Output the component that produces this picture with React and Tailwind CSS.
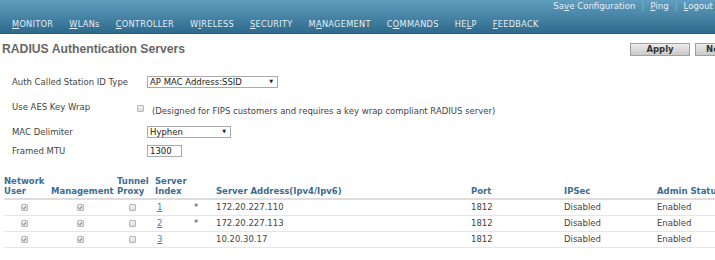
import React from "react";

const font = { fontFamily: '"DejaVu Sans", Verdana, sans-serif' };

function Acc({ pre = "", u, post = "" }) {
  return (
    <span>
      {pre}
      <span className="underline underline-offset-1">{u}</span>
      {post}
    </span>
  );
}

function Box({ checked }) {
  return (
    <span className="inline-flex h-[7px] w-[7px] items-center justify-center rounded-[1px] border border-[#b5b5b5] bg-gradient-to-b from-[#f4f4f4] to-[#dcdcdc]">
      {checked && (
        <svg viewBox="0 0 8 8" className="h-[7px] w-[7px]">
          <path d="M1.5 4.2 L3.2 6 L6.6 1.6" fill="none" stroke="#555" strokeWidth="1.4" />
        </svg>
      )}
    </span>
  );
}

function Select({ value, width }) {
  return (
    <div
      className={`flex h-[12px] items-center justify-between border border-[#a9a9a9] bg-white pl-[2px] pr-[4px] text-[8.5px] text-[#222] ${width}`}
    >
      <span>{value}</span>
      <span className="text-[5px]">▼</span>
    </div>
  );
}

const servers = [
  { idx: "1", star: true, addr: "172.20.227.110" },
  { idx: "2", star: true, addr: "172.20.227.113" },
  { idx: "3", star: false, addr: "10.20.30.17" },
];

const cols = "grid grid-cols-[47px_66px_38px_61px_255px_93px_93px_60px]";

export default function App() {
  return (
    <div className="h-[260px] w-[715px] overflow-hidden bg-white text-[#444]" style={font}>
      {/* top bar */}
      <div className="h-[34px] border-b border-[#2a5f7c] bg-gradient-to-b from-[#5f9ec0] to-[#2e6a8b] text-[#e3eef4]">
        <div className="flex h-[12px] items-center justify-end gap-[6px] pr-[2px] text-[8.6px]">
          <Acc pre="Sa" u="v" post="e Configuration" />
          <span className="text-[#8fb5cb]">|</span>
          <Acc u="P" post="ing" />
          <span className="text-[#8fb5cb]">|</span>
          <Acc u="L" post="ogout" />
        </div>
        <div className="flex h-[22px] items-center gap-[16px] pl-[12px] pt-[3px] text-[8.2px] tracking-[0.3px]">
          <Acc u="M" post="ONITOR" />
          <Acc u="W" post="LANs" />
          <Acc u="C" post="ONTROLLER" />
          <Acc pre="W" u="I" post="RELESS" />
          <Acc u="S" post="ECURITY" />
          <Acc pre="M" u="A" post="NAGEMENT" />
          <Acc pre="C" u="O" post="MMANDS" />
          <Acc pre="HE" u="L" post="P" />
          <Acc u="F" post="EEDBACK" />
        </div>
      </div>

      {/* title */}
      <div className="flex h-[28px] items-center pl-[2px]">
        <h1
          className="pt-[2px] text-[12.2px] font-bold text-[#676767]"
          style={{ fontFamily: '"Liberation Sans", Arial, sans-serif' }}
        >
          RADIUS Authentication Servers
        </h1>
        <div className="ml-auto mr-[-32px] flex shrink-0 gap-[5px] pt-[3px]">
          <div className="flex h-[13px] w-[60px] items-center justify-center border border-[#a0a0a0] bg-gradient-to-b from-[#ececec] to-[#c9c9c9] text-[8.5px] font-bold text-[#333]">
            Apply
          </div>
          <div className="flex h-[13px] w-[52px] items-center justify-center border border-[#a0a0a0] bg-gradient-to-b from-[#ececec] to-[#c9c9c9] text-[8.5px] font-bold text-[#333]">
            New...
          </div>
        </div>
      </div>

      {/* form */}
      <div className="pl-[12px] pt-[13px] text-[8.5px]">
        <div className="flex h-[14px] items-center">
          <span className="w-[135px]">Auth Called Station ID Type</span>
          <Select value="AP MAC Address:SSID" width="w-[131px]" />
        </div>
        <div className="mt-[12px] flex h-[14px] items-center">
          <span className="w-[125px] self-start">Use AES Key Wrap</span>
          <Box />
          <span className="ml-[8px] pt-[6px]">
            (Designed for FIPS customers and requires a key wrap compliant RADIUS server)
          </span>
        </div>
        <div className="mt-[10px] flex h-[14px] items-center">
          <span className="w-[135px]">MAC Delimiter</span>
          <Select value="Hyphen" width="w-[84px]" />
        </div>
        <div className="mt-[5px] flex h-[14px] items-center">
          <span className="w-[135px]">Framed MTU</span>
          <div className="flex h-[12px] w-[35px] items-center border border-[#a9a9a9] pl-[2px] text-[#222]">
            1300
          </div>
        </div>
      </div>

      {/* servers table */}
      <div className="mt-[18px] pl-[4px] text-[8.5px]">
        <div className={`${cols} h-[24px] items-end border-b-2 border-[#dddddd] pb-[2px] font-bold leading-[10px] text-[#3a6d91]`}>
          <span>Network<br />User</span>
          <span>Management</span>
          <span>Tunnel<br />Proxy</span>
          <span>Server<br />Index</span>
          <span>Server Address(Ipv4/Ipv6)</span>
          <span>Port</span>
          <span>IPSec</span>
          <span className="whitespace-nowrap">Admin Status</span>
        </div>
        {servers.map((s) => (
          <div key={s.idx} className={`${cols} h-[16px] items-center border-b border-[#e6e6e6] text-[#444]`}>
            <span className="flex pl-[17px]"><Box checked /></span>
            <span className="flex pl-[26px]"><Box checked /></span>
            <span className="flex pl-[12px]"><Box /></span>
            <span className="flex">
              <span className="w-[39px] pl-[2px] text-[#3c7fc0] underline">{s.idx}</span>
              <span>{s.star ? "*" : ""}</span>
            </span>
            <span>{s.addr}</span>
            <span>1812</span>
            <span>Disabled</span>
            <span>Enabled</span>
          </div>
        ))}
      </div>
    </div>
  );
}
